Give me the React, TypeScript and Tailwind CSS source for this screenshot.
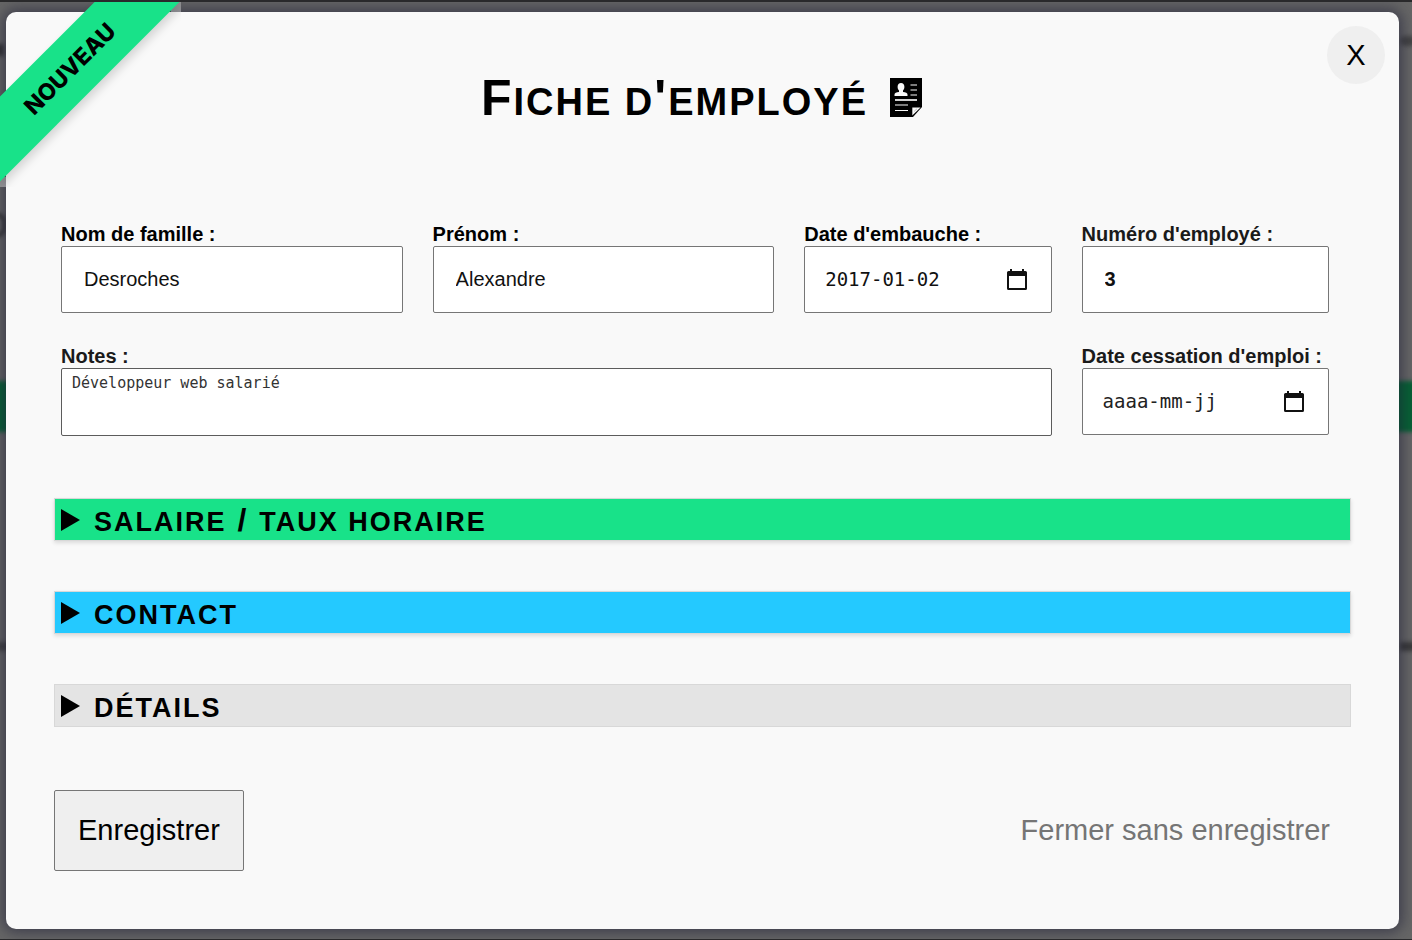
import React, { useState } from "react";

const field =
  "h-[67px] w-full rounded-[2px] border border-[#767676] bg-white text-[20px] text-[#111] outline-none";

type FieldProps = {
  id: string;
  label: string;
  className?: string;
  children: React.ReactNode;
};

function Field({ id, label, className = "", children }: FieldProps) {
  return (
    <div className={`flex min-w-0 flex-col ${className}`}>
      <label htmlFor={id} className="h-6 whitespace-nowrap text-[20px] leading-6 font-bold">
        {label}
      </label>
      {children}
    </div>
  );
}

function CalendarIcon() {
  return (
    <svg viewBox="0 0 20 22" className="h-[22px] w-5" aria-hidden="true">
      <path
        fill="currentColor"
        fillRule="evenodd"
        d="M3 0h2v2h10V0h2v2h1.500a1.500 1.500 0 0 1 1.500 1.500v16a1.500 1.500 0 0 1-1.500 1.500h-17A1.500 1.500 0 0 1 0 19.500v-16A1.500 1.500 0 0 1 1.500 2H3zM2 7v12h16V7z"
      />
    </svg>
  );
}

function DateInput({ id, value, placeholder }: { id: string; value?: string; placeholder?: string }) {
  return (
    <div className={`${field} flex items-center pr-6 pl-5`}>
      <input
        id={id}
        type="text"
        defaultValue={value}
        placeholder={placeholder}
        className="min-w-0 flex-1 bg-transparent font-['DejaVu_Sans_Mono',monospace] text-[19px] outline-none placeholder:text-[#222]"
      />
      <button type="button" aria-label="Choisir une date">
        <CalendarIcon />
      </button>
    </div>
  );
}

function SheetIcon() {
  return (
    <svg viewBox="0 0 32 39" className="h-[39px] w-8" aria-hidden="true">
      <path d="M0 0h32v29l-9 10H0z" fill="#000" />
      <path
        fill="#f9f9f9"
        d="M11 5c2.100 0 3.400 1.300 3.400 3.800 0 1.800-.6 2.900-1.400 3.700v1.500c2.600.3 4.500 1 4.500 2.500V18H4.500v-1.500c0-1.500 1.900-2.200 4.500-2.500v-1.500c-.8-.8-1.400-1.900-1.400-3.700C7.600 6.300 8.900 5 11 5z"
      />
      <path stroke="#f9f9f9" strokeWidth="1.200" d="M20.500 7H27M20.500 12H27M20.500 17H27M5 27h13M5 32.500h13" />
      <path stroke="#d0d0d0" strokeWidth="2" d="M5 22h22" />
      <path d="M22.300 29.500H30.500L22.300 37.500z" fill="#f9f9f9" />
      <path d="M24 33.500l3-2.800" stroke="#999" strokeWidth="0.600" />
    </svg>
  );
}

function Section({ color, children }: { color: string; children: React.ReactNode }) {
  return (
    <details>
      <summary
        className={`flex h-[43px] cursor-pointer list-none items-center gap-[14px] border border-[#d8d8d8] pl-[6px] ${color}`}
      >
        <svg viewBox="0 0 19 22" className="h-[22px] w-[19px]" aria-hidden="true">
          <path d="M0 0l19 11L0 22z" fill="#000" />
        </svg>
        <h2 className="pt-1 text-[27px] leading-10 font-bold tracking-[2px] uppercase">{children}</h2>
      </summary>
    </details>
  );
}

export default function App() {
  const [notes, setNotes] = useState("Développeur web salarié");
  return (
    <div className="relative min-h-screen overflow-hidden border-t-2 border-b border-[#29292b] bg-[#666] pt-[10px] pr-[13px] pb-[10px] pl-[6px] font-['Liberation_Sans',Arial,sans-serif] text-black">
      <div className="absolute inset-0 blur-[2px]" aria-hidden="true">
        <div className="absolute inset-x-[-8px] top-[379px] h-[51px] bg-[#076135]" />
        <div className="absolute top-[34px] right-[-4px] h-[10px] w-4 rounded-full bg-[#444]" />
        <div className="absolute top-[640px] right-[-4px] h-[9px] w-4 bg-[#3a3a3a]" />
        <div className="absolute top-[42px] left-[-4px] h-3 w-2 bg-[#333]" />
        <div className="absolute top-[211px] left-[-12px] h-6 w-[18px] rounded-full border-[3px] border-[#222]" />
        <div className="absolute top-[640px] left-[-4px] h-[9px] w-4 bg-[#444]" />
      </div>

      <main className="relative rounded-[10px] bg-[#f9f9f9] px-12 pb-[58px] shadow-[0_0_14px_3px_rgba(30,30,55,0.6)]">
        <button
          type="button"
          aria-label="Fermer"
          className="absolute top-[14px] right-[14px] size-[58px] rounded-full bg-[#efefef] text-[29px] leading-[58px]"
        >
          X
        </button>

        <header className="flex h-[210px] items-start justify-center gap-[22px] pt-[60px] pr-[2px]">
          <h1 className="text-[38px] leading-[52px] font-bold tracking-[2px] uppercase first-letter:text-[50px]">
            Fiche d<span className="text-[50px] leading-[40px]">'</span>employé
          </h1>
          <div className="pt-[6px]">
            <SheetIcon />
          </div>
        </header>

        <form onSubmit={(e) => e.preventDefault()}>
          <div className="grid grid-cols-[29fr_29fr_21fr_21fr] gap-x-[30px] gap-y-[31px] pr-[22px] pl-[7px]">
            <Field id="nom" label="Nom de famille :">
              <input id="nom" type="text" defaultValue="Desroches" className={`${field} px-[22px]`} />
            </Field>
            <Field id="prenom" label="Prénom :">
              <input id="prenom" type="text" defaultValue="Alexandre" className={`${field} px-[22px]`} />
            </Field>
            <Field id="embauche" label="Date d'embauche :">
              <DateInput id="embauche" value="2017-01-02" />
            </Field>
            <Field id="numero" label="Numéro d'employé :" className="text-[#1a1a1a]">
              <input id="numero" type="text" defaultValue="3" className={`${field} px-[22px] font-bold`} />
            </Field>
            <Field id="notes" label="Notes :" className="col-span-3 text-[#1a1a1a]">
              <textarea
                id="notes"
                value={notes}
                onChange={(e) => setNotes(e.target.value)}
                className="h-[68px] w-full resize-none rounded-[2px] border border-[#5c5c5c] bg-white px-[10px] py-1 font-['DejaVu_Sans_Mono',monospace] text-[15px] leading-5 text-[#333] outline-none"
              />
            </Field>
            <Field id="cessation" label="Date cessation d'emploi :" className="text-[#1a1a1a]">
              <DateInput id="cessation" placeholder="aaaa-mm-jj" />
            </Field>
          </div>

          <div className="mt-[62px] flex flex-col gap-[50px]">
            <Section color="bg-[#18e289] shadow-[0_2px_4px_rgba(0,0,0,0.12)]">
              Salaire<span className="text-[32px] leading-8"> / </span>taux horaire
            </Section>
            <Section color="bg-[#24c9ff] shadow-[0_2px_4px_rgba(0,0,0,0.12)]">Contact</Section>
            <Section color="bg-[#e4e4e4]">Détails</Section>
          </div>

          <div className="mt-[63px] flex items-center justify-between pr-[21px]">
            <button
              type="submit"
              className="h-[81px] rounded-[2px] border border-[#767676] bg-[#efefef] px-[23px] text-[29px]"
            >
              Enregistrer
            </button>
            <button type="button" className="text-[29px] text-[#757575]">
              Fermer sans enregistrer
            </button>
          </div>
        </form>
      </main>

      <div className="absolute top-0 left-0 h-[185px] w-[181px] overflow-hidden bg-[linear-gradient(#fff6,#fff6),linear-gradient(#fff6,#fff6)] bg-[position:0_175px,171px_0] bg-[size:6px_10px,10px_10px] bg-no-repeat">
        <div className="absolute top-[37px] left-[-82px] h-[60px] w-[304px] -rotate-45 bg-[#18e289] text-center font-[Inter,sans-serif] text-[23px] leading-[60px] font-extrabold shadow-[0_5px_10px_rgba(0,0,0,0.15)]">
          NOUVEAU
        </div>
      </div>
    </div>
  );
}
